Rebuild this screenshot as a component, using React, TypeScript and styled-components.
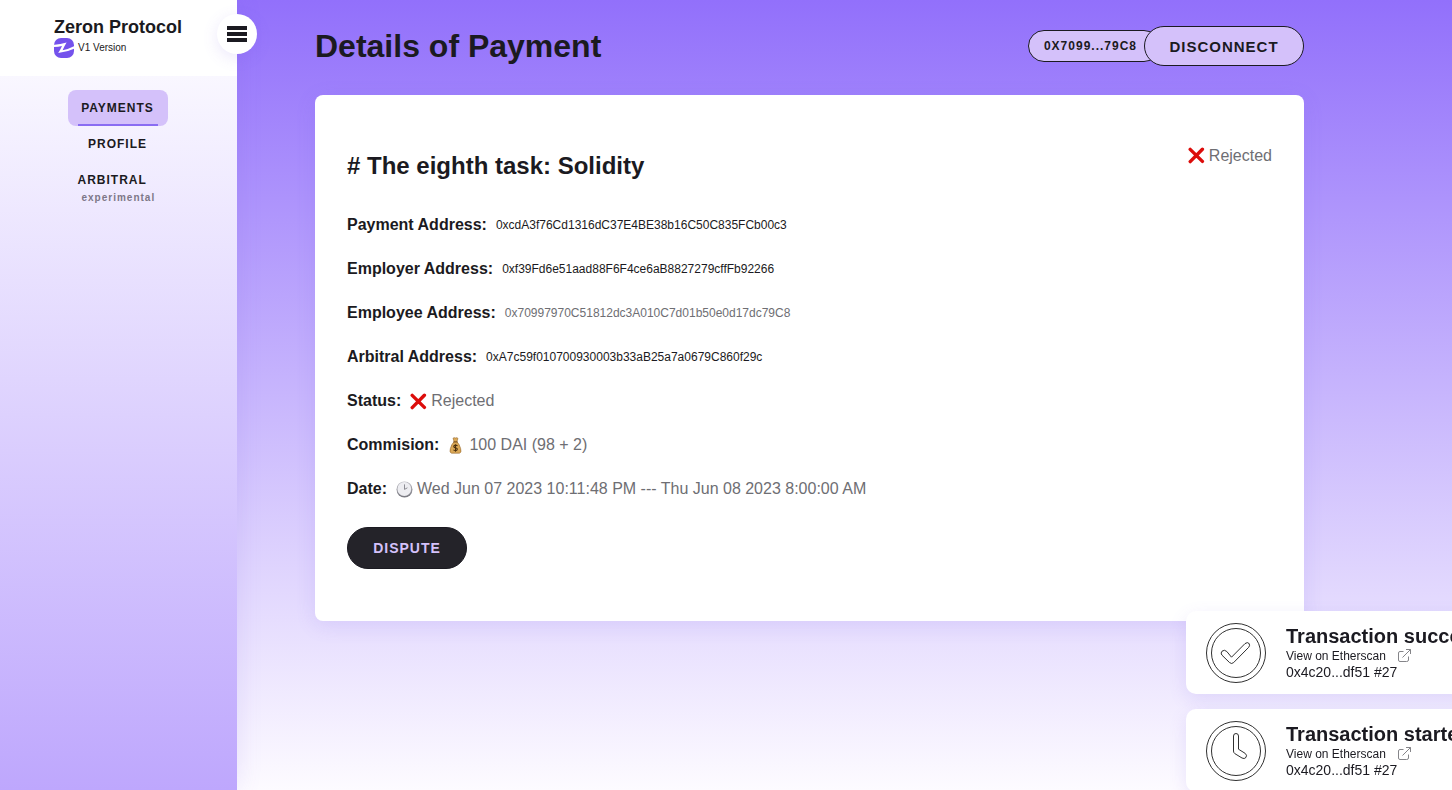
import React from "react";
import styled, { createGlobalStyle } from "styled-components";

const ink = "#1b1a21";
const lilac = "#d4c1fa";
const muted = "#6e6e73";

const GlobalStyle = createGlobalStyle`
  *, *::before, *::after { box-sizing: border-box; }
  body {
    margin: 0;
    color: ${ink};
    font-family: "Liberation Sans", Arial, Helvetica, sans-serif;
    font-size: 16px;
  }
  h1, h2, h3, p, ul, dl, dd { margin: 0; padding: 0; }
  button { font-family: inherit; cursor: pointer; }
  a { color: inherit; text-decoration: none; }
`;

const Page = styled.div`
  display: flex;
  min-height: 100vh;
  background: linear-gradient(180deg, #9270fb 0%, #fdfbff 100%);
`;

const Sidebar = styled.aside`
  position: relative;
  display: flex;
  flex-direction: column;
  flex: 0 0 237px;
  background: #fff;
  box-shadow: 0 0 24px rgba(120, 90, 230, 0.14);
`;

const Brand = styled.div`
  display: flex;
  flex-direction: column;
  height: 76px;
  padding: 16px 0 0 54px;
`;

const BrandName = styled.p`
  font-size: 18px;
  font-weight: 700;
  line-height: 22px;
`;

const BrandVersion = styled.div`
  display: flex;
  align-items: center;
  gap: 4px;
  font-size: 10px;
  line-height: 20px;
`;

const MenuButton = styled.button`
  position: absolute;
  top: 14px;
  right: -20px;
  display: flex;
  flex-direction: column;
  align-items: center;
  justify-content: center;
  gap: 2px;
  width: 40px;
  height: 40px;
  padding: 0;
  border: 0;
  border-radius: 50%;
  background: #fff;
  box-shadow: 0 4px 16px rgba(120, 90, 230, 0.14);
`;

const MenuBar = styled.span`
  width: 20px;
  height: 4px;
  background: ${ink};
`;

const Nav = styled.nav`
  display: flex;
  flex-direction: column;
  align-items: center;
  flex: 1;
  padding: 14px 2px 0 0;
  background: linear-gradient(180deg, #f9f7ff 0%, #bea7fd 100%);
`;

const NavLink = styled.a<{ $active?: boolean }>`
  display: flex;
  flex-direction: column;
  align-items: center;
  justify-content: space-between;
  width: 100px;
  height: 36px;
  border-radius: 8px;
  background: ${(p) => (p.$active ? lilac : "transparent")};
  font-size: 12px;
  font-weight: 700;
  line-height: 36px;
  letter-spacing: 1px;
  text-transform: uppercase;

  &::after {
    content: "";
    flex: 0 0 2px;
    width: 80px;
    margin-top: -2px;
    background: ${(p) => (p.$active ? "#8a6df2" : "transparent")};
  }
`;

const NavGroup = styled.a`
  display: flex;
  flex-direction: column;
  width: 80px;
  padding-top: 10px;
  font-size: 12px;
  font-weight: 700;
  line-height: 17px;
  letter-spacing: 1px;
  text-transform: uppercase;
`;

const NavNote = styled.small`
  padding-left: 4px;
  color: #7d7787;
  font-size: 10px;
  text-transform: none;
`;

const Main = styled.main`
  flex: 1;
  min-width: 0;
  padding: 26px 148px 52px 78px;
`;

const Header = styled.header`
  display: flex;
  align-items: center;
  justify-content: space-between;
  margin-bottom: 29px;
`;

const Title = styled.h1`
  font-size: 32px;
  line-height: 40px;
`;

const Wallet = styled.div`
  display: flex;
  align-items: center;
`;

const WalletAddress = styled.span`
  height: 32px;
  margin-right: -16px;
  padding: 0 22px 0 15px;
  border: 1px solid ${ink};
  border-radius: 16px;
  background: ${lilac};
  font-size: 12px;
  font-weight: 700;
  line-height: 30px;
  letter-spacing: 1px;
`;

const Button = styled.button<{ $dark?: boolean }>`
  position: relative;
  height: ${(p) => (p.$dark ? 42 : 40)}px;
  min-width: ${(p) => (p.$dark ? 120 : 160)}px;
  padding: 0 24px;
  border: 1px solid ${ink};
  border-radius: 21px;
  background: ${(p) => (p.$dark ? "#242329" : lilac)};
  color: ${(p) => (p.$dark ? lilac : ink)};
  font-size: ${(p) => (p.$dark ? 14 : 15)}px;
  font-weight: 700;
  letter-spacing: 1px;
  text-transform: uppercase;
`;

const Card = styled.section`
  padding: 52px 32px;
  border-radius: 8px;
  background: #fff;
  box-shadow: 0 4px 20px rgba(120, 90, 230, 0.14);
`;

const CardHead = styled.div`
  display: flex;
  align-items: flex-start;
  justify-content: space-between;
  margin-bottom: 18px;
`;

const TaskName = styled.h2`
  font-size: 24px;
  line-height: 38px;
`;

const Value = styled.span<{ $small?: boolean; $dark?: boolean }>`
  display: flex;
  align-items: center;
  gap: 4px;
  color: ${(p) => (p.$dark ? ink : muted)};
  font-size: ${(p) => (p.$small ? 12 : 16)}px;
  line-height: 16px;
`;

const Details = styled.dl`
  margin-bottom: 16px;
`;

const Row = styled.div`
  display: flex;
  align-items: center;
  gap: 9px;
  height: 44px;
`;

const Label = styled.dt`
  font-weight: 700;
`;

const Toasts = styled.div`
  position: fixed;
  right: -54px;
  bottom: -2px;
  display: flex;
  flex-direction: column;
  gap: 15px;
  width: 320px;
`;

const ToastCard = styled.div`
  display: flex;
  align-items: center;
  gap: 20px;
  height: 83px;
  padding: 0 20px;
  border-radius: 10px;
  background: #fff;
  box-shadow: 0 6px 18px rgba(120, 90, 230, 0.14);
  white-space: nowrap;
`;

const ToastTitle = styled.h3`
  font-size: 20px;
  line-height: 24px;
`;

const ToastText = styled.div`
  padding-bottom: 2px;
`;

const ToastLink = styled.a`
  display: flex;
  align-items: center;
  gap: 12px;
  font-size: 12px;
  line-height: 16px;
`;

const ToastHash = styled.p`
  font-size: 14px;
  line-height: 16px;
`;

const Logo = () => (
  <svg width="20" height="20" viewBox="0 0 20 20" aria-hidden="true">
    <rect width="20" height="20" rx="7" fill="#7452ec" />
    <path
      d="M-1 6.6 Q5 7 12.6 4.6 Q10.5 8 8.6 12.2 Q15 11.2 21 7.8 V10.2 Q14 14 4.2 15 Q6.4 11.6 8 8 Q4 9 -1 9 Z"
      fill="#fff"
    />
  </svg>
);

const Cross = () => (
  <svg width="17" height="17" viewBox="0 0 17 17" aria-hidden="true">
    <path d="M2.2 2.4 L14.4 14.4 M14.4 2.2 L2.2 14.6" stroke="#dc0d0b" strokeWidth="3.4" strokeLinecap="round" />
  </svg>
);

const MoneyBag = () => (
  <svg width="17" height="17" viewBox="0 0 17 17" aria-hidden="true">
    <g transform="translate(-1 0)">
      <path
        d="M6 1.2 Q7.2 0.2 8.4 1 Q10 0.2 11 1.4 L9.9 4.6 Q12.6 7.5 13.6 11.5 Q15 15.8 12.4 16.2 H4.6 Q2 15.8 3.4 11.5 Q4.4 7.5 7.1 4.6 Z"
        fill="#dba958"
        stroke="#94642a"
        strokeWidth="0.6"
      />
      <path d="M6.4 4.9 H10.6" stroke="#7c5220" strokeWidth="1.2" />
      <path
        d="M10.5 8.9 Q8.5 7.4 6.9 8.8 Q6.4 10.3 8.5 10.8 Q10.8 11.4 10.1 12.9 Q8.5 14.3 6.4 12.9 M8.5 7.2 V14.8"
        fill="none"
        stroke="#4b300f"
        strokeWidth="1.1"
      />
    </g>
  </svg>
);

const ClockFace = () => (
  <svg width="17" height="17" viewBox="0 0 17 17" aria-hidden="true">
    <defs>
      <linearGradient id="rim" x1="0" y1="0" x2="0" y2="1">
        <stop offset="0" stopColor="#b9b9c0" />
        <stop offset="1" stopColor="#77777f" />
      </linearGradient>
    </defs>
    <circle cx="8.5" cy="8.5" r="8" fill="url(#rim)" />
    <circle cx="8.3" cy="8" r="6.9" fill="#ededf1" />
    <path d="M8.5 3.4 V8.4 L11.4 6.8" fill="none" stroke="#8c8c93" strokeWidth="1" />
  </svg>
);

const ring = { fill: "none", stroke: "#1a1a1a", strokeWidth: 0.9 };

const CheckBadge = () => (
  <svg width="60" height="60" viewBox="0 0 60 60" aria-hidden="true">
    <circle cx="30" cy="30" r="29.5" {...ring} />
    <circle cx="30" cy="30" r="24.5" {...ring} />
    <path
      d="M16 28.2 Q18.5 26.2 20.8 28.5 L25.5 34.2 L39 20.6 Q41.5 18.6 43.2 20.6 Q44.2 22.8 42.6 24.4 L27.6 39.6 Q25.6 41.4 23.6 39.6 L15.8 32 Q14.4 30 16 28.2 Z"
      {...ring}
    />
  </svg>
);

const ClockBadge = () => (
  <svg width="60" height="60" viewBox="0 0 60 60" aria-hidden="true">
    <circle cx="30" cy="30" r="29.5" {...ring} />
    <circle cx="30" cy="30" r="24.5" {...ring} />
    <path
      d="M27.5 15 Q27.5 12.5 30 12.5 Q32.5 12.5 32.5 15 V28.2 L39.2 32.4 Q41.4 34.2 40 36.4 Q38.4 38.4 36 37 L28.8 32.6 Q27.5 31.6 27.5 30 Z"
      {...ring}
    />
  </svg>
);

const ExternalIcon = () => (
  <svg width="13" height="13" viewBox="0 0 13 13" fill="none" stroke="#858589" aria-hidden="true">
    <path d="M5.5 2.5 H2 Q0.5 2.5 0.5 4 V11 Q0.5 12.5 2 12.5 H8.5 Q10.5 12.5 10.5 11 V7.5" />
    <path d="M8 0.5 H12.5 V5 M12.5 0.5 L4.5 8.5" />
  </svg>
);

const addresses = [
  { label: "Payment Address:", value: "0xcdA3f76Cd1316dC37E4BE38b16C50C835FCb00c3", dark: true },
  { label: "Employer Address:", value: "0xf39Fd6e51aad88F6F4ce6aB8827279cffFb92266", dark: true },
  { label: "Employee Address:", value: "0x70997970C51812dc3A010C7d01b50e0d17dc79C8", dark: false },
  { label: "Arbitral Address:", value: "0xA7c59f010700930003b33aB25a7a0679C860f29c", dark: true },
];

const facts = [
  { label: "Status:", icon: <Cross />, value: "Rejected" },
  { label: "Commision:", icon: <MoneyBag />, value: "100 DAI (98 + 2)" },
  { label: "Date:", icon: <ClockFace />, value: "Wed Jun 07 2023 10:11:48 PM --- Thu Jun 08 2023 8:00:00 AM" },
];

const Toast = ({ icon, title }: { icon: React.ReactNode; title: string }) => (
  <ToastCard role="status">
    {icon}
    <ToastText>
      <ToastTitle>{title}</ToastTitle>
      <ToastLink href="#etherscan">
        View on Etherscan <ExternalIcon />
      </ToastLink>
      <ToastHash>0x4c20...df51 #27</ToastHash>
    </ToastText>
  </ToastCard>
);

export default function App() {
  return (
    <>
      <GlobalStyle />
      <Page>
        <Sidebar>
          <Brand>
            <BrandName>Zeron Protocol</BrandName>
            <BrandVersion>
              <Logo /> V1 Version
            </BrandVersion>
          </Brand>
          <Nav>
            <NavLink href="#payments" $active>
              Payments
            </NavLink>
            <NavLink href="#profile">Profile</NavLink>
            <NavGroup href="#arbitral">
              Arbitral
              <NavNote>experimental</NavNote>
            </NavGroup>
          </Nav>
          <MenuButton type="button" aria-label="Toggle menu">
            <MenuBar />
            <MenuBar />
            <MenuBar />
          </MenuButton>
        </Sidebar>
        <Main>
          <Header>
            <Title>Details of Payment</Title>
            <Wallet>
              <WalletAddress>0X7099...79C8</WalletAddress>
              <Button type="button">Disconnect</Button>
            </Wallet>
          </Header>
          <Card>
            <CardHead>
              <TaskName># The eighth task: Solidity</TaskName>
              <Value>
                <Cross /> Rejected
              </Value>
            </CardHead>
            <Details>
              {addresses.map((a) => (
                <Row key={a.label}>
                  <Label>{a.label}</Label>
                  <Value as="dd" $small $dark={a.dark}>
                    {a.value}
                  </Value>
                </Row>
              ))}
              {facts.map((f) => (
                <Row key={f.label}>
                  <Label>{f.label}</Label>
                  <Value as="dd">
                    {f.icon} {f.value}
                  </Value>
                </Row>
              ))}
            </Details>
            <Button type="button" $dark>
              Dispute
            </Button>
          </Card>
        </Main>
      </Page>
      <Toasts>
        <Toast icon={<CheckBadge />} title="Transaction success" />
        <Toast icon={<ClockBadge />} title="Transaction started" />
      </Toasts>
    </>
  );
}
